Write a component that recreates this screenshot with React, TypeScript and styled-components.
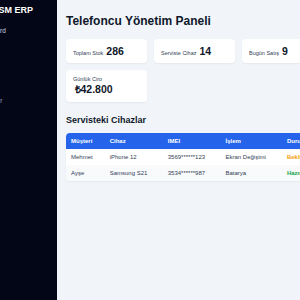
import React from "react";
import styled, { createGlobalStyle } from "styled-components";

const GlobalStyle = createGlobalStyle`
  html, body {
    margin: 0;
    padding: 0;
    overflow: hidden;
    background: #f1f5f9;
    font-family: "Liberation Sans", Arial, sans-serif;
  }
  * { box-sizing: border-box; }
`;

const Layout = styled.div`
  display: flex;
  width: max-content;
  min-height: 100vh;
`;

const Sidebar = styled.aside`
  width: 57px;
  flex-shrink: 0;
  overflow: hidden;
  background: #020617;
  min-height: 100vh;
`;

const SidebarInner = styled.div`
  width: 110px;
  margin-left: -53px;
  padding-top: 5px;
`;

const Brand = styled.div`
  font-size: 9px;
  font-weight: 700;
  line-height: 11px;
  color: #ffffff;
  padding-left: 44.5px;
  white-space: nowrap;
  margin-bottom: 6px;
`;

const NavList = styled.nav`
  display: flex;
  flex-direction: column;
`;

const NavItem = styled.div<{ $active?: boolean }>`
  font-size: 6.5px;
  line-height: 9.5px;
  padding: 4px 0 4px 27px;
  color: ${(p) => (p.$active ? "#94a3b8" : "#cbd5e1")};
  white-space: nowrap;
`;

const Main = styled.main`
  width: 275px;
  flex-shrink: 0;
  padding: 14px 9px 9px;
`;

const Title = styled.h1`
  margin: 0 0 11px;
  font-size: 12px;
  line-height: 14px;
  font-weight: 700;
  color: #0f172a;
`;

const Cards = styled.div`
  display: grid;
  grid-template-columns: repeat(3, 81px);
  gap: 7px;
`;

const Card = styled.div`
  background: #ffffff;
  border-radius: 4px;
  padding: 6px 7px;
  font-size: 5.5px;
  color: #334155;
  box-shadow: 0 1px 2px rgba(15, 23, 42, 0.05);
`;

const Value = styled.strong`
  font-size: 10.5px;
  font-weight: 700;
  color: #0f172a;
  margin-left: 1.5px;
`;

const SectionTitle = styled.h2`
  margin: 13px 0 7px;
  font-size: 9px;
  line-height: 10.5px;
  font-weight: 700;
  color: #0f172a;
`;

const TableCard = styled.div`
  background: #ffffff;
  border-radius: 4px;
  overflow: hidden;
  box-shadow: 0 1px 2px rgba(15, 23, 42, 0.05);
`;

const Table = styled.table`
  width: 100%;
  border-collapse: collapse;
  font-size: 6px;
`;

const Th = styled.th`
  background: #2563eb;
  color: #ffffff;
  font-weight: 700;
  text-align: left;
  height: 16px;
  padding: 0 5px;
  white-space: nowrap;
`;

const Tr = styled.tr`
  &:nth-child(even) td {
    background: #f8fafc;
  }
`;

const Td = styled.td`
  height: 16px;
  padding: 0 5px;
  color: #334155;
  white-space: nowrap;
`;

const Status = styled.span<{ $color: string }>`
  color: ${(p) => p.$color};
  font-weight: 700;
`;

const stats = [
  { label: "Toplam Stok", value: "286" },
  { label: "Serviste Cihaz", value: "14" },
  { label: "Bugün Satış", value: "9" },
  { label: "Günlük Ciro", value: "₺42.800" },
];

const rows = [
  { customer: "Mehmet", device: "iPhone 12", imei: "3569******123", job: "Ekran Değişimi", status: "Bekliyor", color: "#f59e0b" },
  { customer: "Ayşe", device: "Samsung S21", imei: "3534******987", job: "Batarya", status: "Hazır", color: "#16a34a" },
];

export default function App() {
  return (
    <>
      <GlobalStyle />
      <Layout>
        <Sidebar>
          <SidebarInner>
            <Brand>GSM ERP</Brand>
            <NavList>
              <NavItem>Dashboard</NavItem>
              <NavItem>Stok</NavItem>
              <NavItem>Servis</NavItem>
              <NavItem>Satış</NavItem>
              <NavItem $active>Müşteriler</NavItem>
            </NavList>
          </SidebarInner>
        </Sidebar>
        <Main>
          <Title>Telefoncu Yönetim Paneli</Title>
          <Cards>
            {stats.map((s) => (
              <Card key={s.label}>
                {s.label} <Value>{s.value}</Value>
              </Card>
            ))}
          </Cards>
          <SectionTitle>Servisteki Cihazlar</SectionTitle>
          <TableCard>
            <Table>
              <thead>
                <tr>
                  <Th>Müşteri</Th>
                  <Th>Cihaz</Th>
                  <Th>IMEI</Th>
                  <Th>İşlem</Th>
                  <Th>Durum</Th>
                </tr>
              </thead>
              <tbody>
                {rows.map((r) => (
                  <Tr key={r.customer}>
                    <Td>{r.customer}</Td>
                    <Td>{r.device}</Td>
                    <Td>{r.imei}</Td>
                    <Td>{r.job}</Td>
                    <Td>
                      <Status $color={r.color}>{r.status}</Status>
                    </Td>
                  </Tr>
                ))}
              </tbody>
            </Table>
          </TableCard>
        </Main>
      </Layout>
    </>
  );
}
